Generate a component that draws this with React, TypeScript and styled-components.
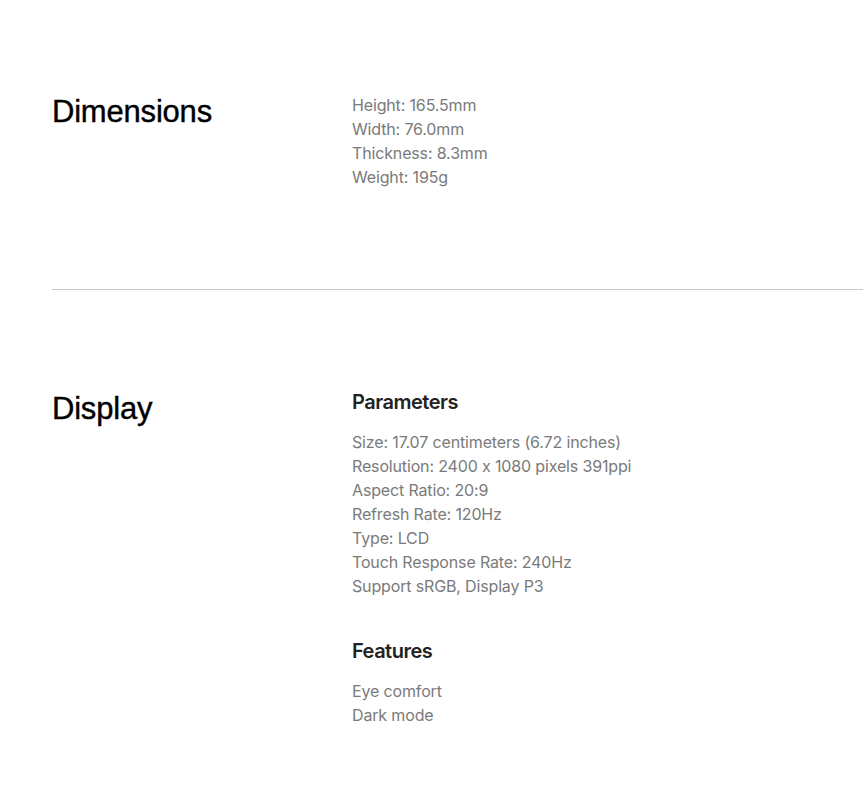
import React from "react";
import styled, { createGlobalStyle } from "styled-components";

const GlobalStyle = createGlobalStyle`
  html, body {
    margin: 0;
    padding: 0;
    background: #fff;
  }
  body {
    font-family: Inter, "Liberation Sans", sans-serif;
    font-feature-settings: "calt" 0;
    -webkit-font-smoothing: antialiased;
  }
`;

interface ISpecGroup {
  heading?: string;
  items: string[];
}

interface ISpecSection {
  title: string;
  groups: ISpecGroup[];
}

const SECTIONS: ISpecSection[] = [
  {
    title: "Dimensions",
    groups: [
      {
        items: [
          "Height: 165.5mm",
          "Width: 76.0mm",
          "Thickness: 8.3mm",
          "Weight: 195g",
        ],
      },
    ],
  },
  {
    title: "Display",
    groups: [
      {
        heading: "Parameters",
        items: [
          "Size: 17.07 centimeters (6.72 inches)",
          "Resolution: 2400 x 1080 pixels 391ppi",
          "Aspect Ratio: 20:9",
          "Refresh Rate: 120Hz",
          "Type: LCD",
          "Touch Response Rate: 240Hz",
          "Support sRGB, Display P3",
        ],
      },
      {
        heading: "Features",
        items: ["Eye comfort", "Dark mode"],
      },
    ],
  },
];

const Page = styled.div`
  padding-left: 52px;
  overflow: hidden;
`;

const Section = styled.section<{ $first?: boolean; $last?: boolean }>`
  display: grid;
  grid-template-columns: 300px 1fr;
  padding: ${(p) => (p.$first ? "93px" : "100px")} 0
    ${(p) => (p.$last ? "50px" : "100px")};
  border-bottom: ${(p) => (p.$last ? "none" : "1px solid #c8c8c8")};
`;

const Title = styled.h2`
  margin: 0;
  font-family: "Liberation Sans", Arial, sans-serif;
  font-weight: 400;
  font-size: 31px;
  line-height: 38px;
  color: #000;
  letter-spacing: -0.2px;
  -webkit-text-stroke: 0.4px #000;
`;

const Groups = styled.div`
  display: flex;
  flex-direction: column;
  gap: 41px;
`;

const Group = styled.div`
  display: flex;
  flex-direction: column;
`;

const GroupHeading = styled.h3`
  margin: -1px 0 15px;
  font-size: 20px;
  line-height: 26px;
  font-weight: 600;
  letter-spacing: -0.5px;
  color: #222;
`;

const Item = styled.div`
  font-size: 16px;
  line-height: 24px;
  letter-spacing: -0.15px;
  color: #7a7a7a;
`;

export default function App() {
  return (
    <>
      <GlobalStyle />
      <Page>
        {SECTIONS.map((section, i) => (
          <Section
            key={section.title}
            $first={i === 0}
            $last={i === SECTIONS.length - 1}
          >
            <Title>{section.title}</Title>
            <Groups>
              {section.groups.map((group, j) => (
                <Group key={j}>
                  {group.heading && <GroupHeading>{group.heading}</GroupHeading>}
                  {group.items.map((item) => (
                    <Item key={item}>{item}</Item>
                  ))}
                </Group>
              ))}
            </Groups>
          </Section>
        ))}
      </Page>
    </>
  );
}
